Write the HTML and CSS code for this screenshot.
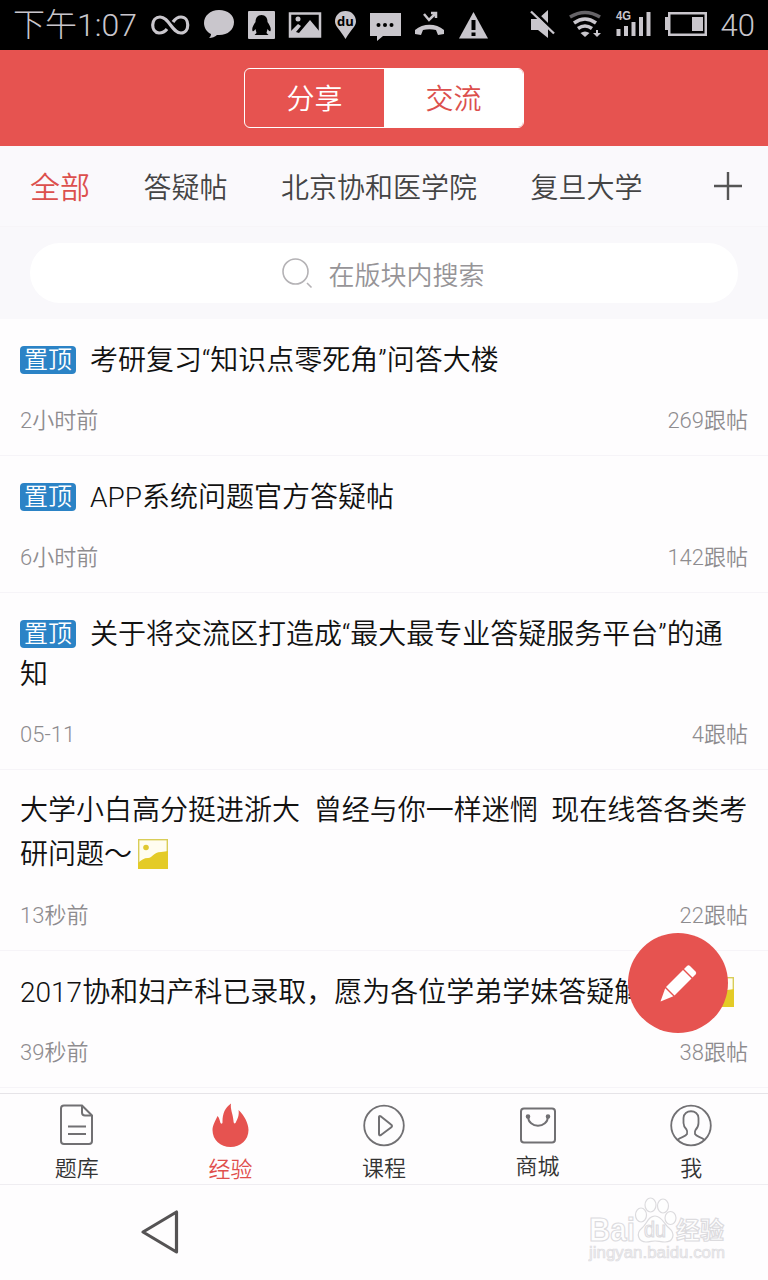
FILE: index.html
```
<!DOCTYPE html>
<html lang="zh-CN">
<head>
  <meta charset="UTF-8" />
  <meta name="viewport" content="width=device-width, initial-scale=1.0" />
  <title>交流</title>
  <link rel="stylesheet" href="styles.css">
</head>
<body>

  <!-- 状态栏 -->
  <div class="status">
    <span class="hora">下午1:07</span>
    <div class="status-icons">
      <svg width="39" height="50" viewBox="0 0 39 50"><path d="M16 29C13 33 9 33 8 33C-1 32 0 17 9 17C18 17 21 33 30 33C39 33 39 17 30 17C27 17 24 19 22 22" fill="none" stroke="#c9c6cc" stroke-width="3.2"/></svg>
      <svg width="32" height="50" viewBox="0 0 32 50"><path d="M16 10C7 10 1 16 1 23c0 5 3 9 7 11 0 2-1 3-2 4 3 0 6-1 8-3 10 1 17-5 17-13C31 15 25 10 16 10z" fill="#c9c6cc"/></svg>
      <svg width="27" height="50" viewBox="0 0 27 50"><rect y="11" width="27" height="28" rx="1" fill="#c9c6cc"/><path d="M13.500 15c-4 0-6 3-6 7-2 3-4 6-3 9 1 1 2-1 3-2l1 4-2 2h14l-2-2 1-4c1 1 2 3 3 2 1-3-1-6-3-9 0-4-2-7-6-7z" fill="#000"/></svg>
      <svg width="34" height="50" viewBox="0 0 34 50"><rect x="2" y="13.500" width="30" height="23" fill="none" stroke="#c9c6cc" stroke-width="2.500"/><circle cx="10" cy="19" r="2.500" fill="#c9c6cc"/><path d="M2 37v-5l8-8 3 2-5 6 3 1 11-13 10 12v5z" fill="#c9c6cc"/></svg>
      <svg width="21" height="50" viewBox="0 0 21 50"><path d="M10.500 11C4 11 0 16 0 21.500c0 5 5 8 10.500 17.500C16 29.500 21 26.500 21 21.500 21 16 17 11 10.500 11z" fill="#c9c6cc"/><text x="10.500" y="26" text-anchor="middle" class="pin-text">du</text></svg>
      <svg width="32" height="50" viewBox="0 0 32 50"><path d="M1 13h31v23H14l-6 5v-5H1z" fill="#c9c6cc"/><circle cx="9.500" cy="25" r="2" /><circle cx="16" cy="25" r="2"/><circle cx="22.500" cy="25" r="2"/></svg>
      <svg width="31" height="50" viewBox="0 0 31 50"><path d="M1 34v-4c8-7 21-7 29 0v4l-6 1-2-5c-4-1-9-1-13 0l-2 5z" fill="#c9c6cc"/><path d="M10 14l5 6 7-7M17 13h5v5" fill="none" stroke="#c9c6cc" stroke-width="2.500"/></svg>
      <svg width="31" height="50" viewBox="0 0 31 50"><path d="M15.500 12L30 38.500H1z" fill="#c9c6cc"/><path d="M15.500 20v10M15.500 32.500v3.500" stroke="#000" stroke-width="4"/></svg>
    </div>
    <div class="status-icons status-right">
      <svg width="26" height="50" viewBox="0 0 26 50"><path d="M1 20h7l10-9v28l-10-8H1z" fill="#c9c6cc"/><path d="M1 9l25 25" stroke="#000" stroke-width="3"/><path d="M1 12.500l23 22" stroke="#c9c6cc" stroke-width="2.400"/></svg>
      <svg width="32" height="50" viewBox="0 0 32 50"><path d="M1 18q15-9 30 0" fill="none" stroke="#666468" stroke-width="3.500"/><path d="M5 24q11-8 22 0M9 29.500q7-5 14 0" fill="none" stroke="#c9c6cc" stroke-width="3.500"/><path d="M11.500 34q4.500-3 9 0L16 38z" fill="#c9c6cc"/><path d="M27 31v3h-3l4 4 4-4h-3v-3z" fill="#c9c6cc"/></svg>
      <svg width="38" height="50" viewBox="0 0 38 50"><text x="2" y="21" class="sig-text" textLength="15" lengthAdjust="spacingAndGlyphs">4G</text><path d="M4.500 37v-7M12 37V27M19.500 37V23M27 37V18M34.500 37V13" stroke="#c9c6cc" stroke-width="4"/></svg>
      <svg width="43" height="50" viewBox="0 0 43 50"><path d="M0 18h3v-5h39v24H3v-6H0z" fill="#c9c6cc"/><path d="M5.500 15.500h34v19h-34z"/><path d="M27 18h11v14H27z" fill="#c9c6cc"/></svg>
      <span class="bateria">40</span>
    </div>
  </div>

  <div class="header">
    <div class="segmented">
      <span class="seg">分享</span>
      <span class="seg seg-on">交流</span>
    </div>
  </div>

  <!-- 版块 -->
  <div class="tabs">
    <span class="tab tab-on">全部</span>
    <span class="tab">答疑帖</span>
    <span class="tab">北京协和医学院</span>
    <span class="tab">复旦大学</span>
    <svg class="mas" width="28" height="28" viewBox="0 0 28 28"><path d="M14 0v28M0 14h28" stroke="#555" stroke-width="2.400"/></svg>
  </div>

  <div class="search">
    <div class="search-box">
      <svg width="32" height="32" viewBox="0 0 32 32" fill="none" stroke="#b4b2b5" stroke-width="1.600"><circle cx="14.500" cy="14.500" r="12.500"/><path d="M26 26l4.500 4.500"/></svg>
      <span>在版块内搜索</span>
    </div>
  </div>

  <!-- 帖子列表 -->
  <div class="posts">
    <div class="post">
      <div class="titulo"><span class="top">置顶</span>考研复习“知识点零死角”问答大楼</div>
      <div class="meta"><span>2小时前</span><span class="num">269跟帖</span></div>
    </div>
    <div class="post">
      <div class="titulo"><span class="top">置顶</span>APP系统问题官方答疑帖</div>
      <div class="meta"><span>6小时前</span><span class="num">142跟帖</span></div>
    </div>
    <div class="post">
      <div class="titulo"><span class="top">置顶</span>关于将交流区打造成“最大最专业答疑服务平台”的通知</div>
      <div class="meta"><span>05-11</span><span class="num">4跟帖</span></div>
    </div>
    <div class="post post-foto">
      <div class="titulo">大学小白高分挺进浙大&nbsp; 曾经与你一样迷惘&nbsp; 现在线答各类考研问题～<svg class="foto" width="30" height="30" viewBox="0 0 30 30"><rect x=".7" y=".7" width="28.600" height="28.600" fill="#fffdf0" stroke="#d9cd58" stroke-width="1.400"/><circle cx="8" cy="8.500" r="2.800" fill="#e0c832"/><path d="M0 30v-6c3-3 6-5 10-5 5 0 5-6 13-6 3 0 5-1 7-1v18z" fill="#e4cb27"/></svg></div>
      <div class="meta"><span>13秒前</span><span class="num">22跟帖</span></div>
    </div>
    <div class="post">
      <div class="titulo una-linea">2017协和妇产科已录取，愿为各位学弟学妹答疑解惑～<svg class="foto" width="30" height="30" viewBox="0 0 30 30"><rect x=".7" y=".7" width="28.600" height="28.600" fill="#fffdf0" stroke="#d9cd58" stroke-width="1.400"/><circle cx="8" cy="8.500" r="2.800" fill="#e0c832"/><path d="M0 30v-6c3-3 6-5 10-5 5 0 5-6 13-6 3 0 5-1 7-1v18z" fill="#e4cb27"/></svg></div>
      <div class="meta"><span>39秒前</span><span class="num">38跟帖</span></div>
    </div>
    <div class="fab">
      <svg width="40" height="40" viewBox="0 0 40 40" fill="#fff"><path d="M26 6l3-3q1.500-1.500 3 0l5.500 5.500q1.500 1.500 0 3l-3 3z"/><path d="M25 7l8.500 8.500L16.500 32.500 8 24z"/><path d="M7.200 25.200L15.300 33.300 2.500 38.500z"/></svg>
    </div>
  </div>

  <div class="tabbar">
    <div class="item">
      <svg width="44" height="44" viewBox="0 0 44 44" fill="none" stroke="#717073" stroke-width="2"><path d="M9 2.500h18l10 10v25.500q0 3-3 3H9q-3 0-3-3V5.500q0-3 3-3z"/><path d="M27 2.500v7q0 3 3 3h7M13 23.500h18M13 31h18"/></svg>
      <span>题库</span>
    </div>
    <div class="item item-on">
      <svg width="44" height="44" viewBox="0 0 44 44" fill="#e65350"><path d="M23 .5C22 6 25 11 25.500 18c0 2 1 3 2 2 2-4 4-8 3-13C36 12 40.500 20 40.500 27c0 10-8 17-18 17s-18-7-18-17c0-5 3-9 5-14 2 2 2 4 3 7 1 1 2 1 2-1C14.500 10 17 5 23 .5z"/></svg>
      <span>经验</span>
    </div>
    <div class="item">
      <svg width="44" height="44" viewBox="0 0 44 44" fill="none" stroke="#717073" stroke-width="1.800"><circle cx="22" cy="22.500" r="19.800"/><path d="M17 14v17q0 2 2 1l10-7.500q2-1.500 0-3L19 13.500q-2-1-2 .5z" stroke-width="2"/></svg>
      <span>课程</span>
    </div>
    <div class="item item-tienda">
      <svg width="44" height="44" viewBox="0 0 44 44" fill="none" stroke="#717073" stroke-width="2"><rect x="5" y="5.500" width="34" height="34" rx="3"/><path d="M12 13c0 13 20 13 20 0"/><circle cx="12" cy="13.500" r="1.300"/><circle cx="32" cy="13.500" r="1.300"/></svg>
      <span>商城</span>
    </div>
    <div class="item">
      <svg width="44" height="44" viewBox="0 0 44 44" fill="none" stroke="#717073" stroke-width="1.800"><circle cx="22" cy="22.500" r="19.800"/><path d="M8.500 37c3-3 8-3 9.500-6 .5-2 .5-3-.5-4.500-2-2-3-4-3-6.500v-5c0-9 15-9 15 0v5c0 3-1 5-3 7-.7 1-.7 2-.5 4 1.500 3 6.500 3 9.500 6"/></svg>
      <span>我</span>
    </div>
  </div>

  <!-- 系统导航 -->
  <div class="nav">
    <svg class="atras" width="40" height="46" viewBox="0 0 40 46"><path d="M36.500 3v40L3 23z" fill="none" stroke="#555354" stroke-width="3.200" stroke-linejoin="round"/></svg>
    <svg class="marca" width="140" height="72" viewBox="0 0 140 72" fill="#fefefe" stroke="#dcdbde" stroke-width="1.200">
      <text x="1" y="45" class="marca-g" textLength="46" lengthAdjust="spacingAndGlyphs">Bai</text>
      <ellipse cx="53" cy="19" rx="5.500" ry="7"/><ellipse cx="62.500" cy="9" rx="5.500" ry="7"/><ellipse cx="75" cy="10" rx="5.500" ry="7"/><ellipse cx="82.500" cy="22" rx="5.500" ry="6.500"/>
      <path d="M67 20c-7 0-8 8-13 12-7 6-3 14 4 14 4 0 6-1 9-1s6 1 10 1c8 0 11-8 4-14-5-4-7-12-14-12z"/>
      <text x="56" y="41" class="marca-du" textLength="22" lengthAdjust="spacingAndGlyphs">du</text>
      <text x="88" y="43" class="marca-cn">经验</text>
      <text x="1" y="62" class="marca-url" textLength="136" lengthAdjust="spacingAndGlyphs">jingyan.baidu.com</text>
    </svg>
  </div>

</body>
</html>
```
FILE: styles.css
```
* {
  box-sizing: border-box;
}

body {
  margin: 0;
  width: 768px;
  height: 1280px;
  overflow: hidden;
  background: #fefdfe;
  font-family: Roboto, "Noto Sans CJK SC", sans-serif;
  font-weight: 350;
  color: #111;
}

svg {
  display: block;
  flex: none;
}

/* Barra de estado */
.status {
  height: 50px;
  padding: 0 13px;
  display: flex;
  align-items: center;
  background: #000;
  color: #c9c6cc;
  line-height: 50px;
  white-space: nowrap;
  font-weight: 300;
}

.hora {
  width: 138px;
  font-size: 32px;
}

.bateria {
  font-size: 31px;
  padding-top: 2px;
}

.status-icons {
  display: flex;
  gap: 13px;
}

.status-right {
  margin-left: 41px;
}

.pin-text {
  font: bold 13px "Open Sans", sans-serif;
  fill: #000;
}

.sig-text {
  font: bold 13px "Liberation Sans", sans-serif;
  fill: #c9c6cc;
}

/* Cabecera */
.header {
  height: 96px;
  padding-top: 18px;
  background: #e65350;
}

.segmented {
  width: 280px;
  height: 60px;
  margin: 0 auto;
  display: flex;
  border: 1.5px solid #fff;
  border-radius: 6px;
  overflow: hidden;
}

.seg {
  flex: 1;
  text-align: center;
  font-size: 28px;
  line-height: 62px;
  color: #fff;
}

.seg-on {
  background: #fff;
  color: #dc504d;
}

.tabs {
  height: 81px;
  padding: 0 26px 0 30px;
  display: flex;
  align-items: center;
  gap: 53.500px;
  background: #faf9fc;
  border-bottom: 1px solid #f7f5f8;
}

.tab {
  font-size: 28px;
  color: #444;
}

.tab-on {
  font-size: 30px;
  color: #dc504d;
  margin-top: -2px;
}

.mas {
  margin-left: auto;
}

.search {
  height: 92px;
  padding: 16px 30px;
  background: #f9f8fb;
}

.search-box {
  height: 60px;
  border-radius: 30px;
  background: #fff;
  display: flex;
  align-items: center;
  justify-content: center;
  gap: 15px;
  padding-right: 2px;
  font-size: 26px;
  color: #969497;
}

/* Lista */
.posts {
  position: relative;
  height: 774px;
}

.post {
  padding: 22px 20px 19px;
  border-bottom: 1px solid #f6f4f8;
}

.titulo {
  font-size: 28px;
  line-height: 40px;
}

.top {
  display: inline-block;
  width: 56px;
  height: 28px;
  margin-right: 14px;
  border-radius: 4px;
  background: #2b83c6;
  color: #fff;
  font-size: 24px;
  line-height: 28px;
  text-align: center;
  vertical-align: 2px;
  margin-top: -2px;
}

.meta {
  display: flex;
  justify-content: space-between;
  margin-top: 25px;
  font-size: 22px;
  line-height: 30px;
  color: #8e8c8f;
}

.post-foto {
  padding-top: 19px;
}

.post-foto .titulo {
  line-height: 44px;
}

.post-foto .meta {
  margin-top: 24px;
}

.una-linea {
  height: 40px;
  white-space: nowrap;
}

.foto {
  display: inline-block;
  margin-left: 6px;
  vertical-align: -5px;
}

/* Boton flotante sobre la lista */
.fab {
  position: absolute;
  right: 40px;
  bottom: 60px;
  width: 100px;
  height: 100px;
  border-radius: 50%;
  background: #e65350;
  display: flex;
  align-items: center;
  justify-content: center;
}

.tabbar {
  height: 92px;
  display: flex;
  border-top: 1px solid #e6e4e8;
  border-bottom: 1px solid #efedf1;
}

.item {
  flex: 1;
  display: flex;
  flex-direction: column;
  align-items: center;
  padding-top: 9px;
  font-size: 22px;
  line-height: 30px;
  color: #333;
}

.item span {
  margin-top: 7px;
}

.item-on {
  color: #e04f4c;
}

.item-on span {
  margin-top: 8px;
}

.item-tienda span {
  margin-top: 5px;
}

.nav {
  height: 95px;
  display: flex;
  justify-content: space-between;
  align-items: flex-start;
  padding: 11px 40px 0 140px;
}

.atras {
  margin-top: 13px;
}

.marca-g {
  font: bold 34px "Liberation Sans", sans-serif;
}

.marca-du {
  font: 22px "Liberation Sans", sans-serif;
}

.marca-cn {
  font: bold 24px "Noto Sans CJK SC", sans-serif;
}

.marca-url {
  font: 16px "Liberation Sans", sans-serif;
  stroke-width: 0.6px;
  fill: #f0eff1;
}
```
